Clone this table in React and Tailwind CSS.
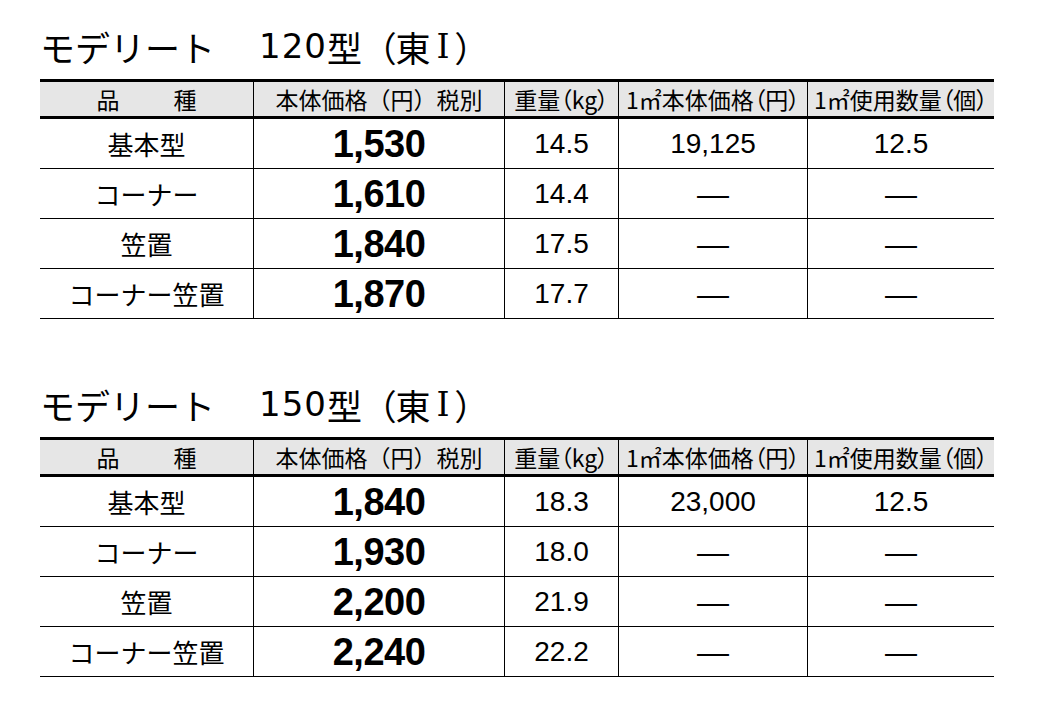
import React from "react";

const jp = "font-['Noto_Sans_CJK_JP','Noto_Sans',sans-serif]";
const lat = "font-['Liberation_Sans',Arial,sans-serif]";

const tables = [
  {
    title: "120",
    rows: [
      ["基本型", "1,530", "14.5", "19,125", "12.5"],
      ["コーナー", "1,610", "14.4", null, null],
      ["笠置", "1,840", "17.5", null, null],
      ["コーナー笠置", "1,870", "17.7", null, null],
    ],
  },
  {
    title: "150",
    rows: [
      ["基本型", "1,840", "18.3", "23,000", "12.5"],
      ["コーナー", "1,930", "18.0", null, null],
      ["笠置", "2,200", "21.9", null, null],
      ["コーナー笠置", "2,240", "22.2", null, null],
    ],
  },
];

const grid = "grid grid-cols-[214px_251px_114px_189px_186px]";

function Dash() {
  return <span className={`${lat} text-[32px] leading-none`}>—</span>;
}

function Section({ t }) {
  return (
    <div className="flex flex-col">
      <div className={`${jp} h-[36px] flex items-center text-[35px] leading-none text-black whitespace-pre`}>
        <span>モデリート</span>
        <span className="w-[44px]" />
        <span className="font-['DejaVu_Sans',sans-serif] text-[34px] tracking-[1px]">{t.title}</span>
        <span>型</span>
        <span className="ml-[16px] [font-feature-settings:'palt']">（東</span>
        <span className="font-['DejaVu_Serif','Liberation_Serif',serif] text-[33px] mx-[6px]">Ⅰ</span>
        <span className="[font-feature-settings:'palt']">）</span>
      </div>
      <div className="mt-[15px] w-[954px] border-t-[3px] border-black">
        <div className={`${grid} h-[37px] bg-[#e6e6e6] border-b-[3px] border-black ${jp} text-[23px] leading-none text-black`}>
          <div className="border-r border-black flex items-center justify-center gap-[54px]">
            <span>品</span>
            <span>種</span>
          </div>
          <div className="border-r border-black flex items-center justify-center">本体価格（円）税別</div>
          <div className="border-r border-black flex items-center justify-center [font-feature-settings:'palt']">
            重量（kg）
          </div>
          <div className="border-r border-black flex items-center justify-center [font-feature-settings:'palt']">
            1㎡本体価格（円）
          </div>
          <div className="flex items-center justify-center [font-feature-settings:'palt']">1㎡使用数量（個）</div>
        </div>
        {t.rows.map((r, i) => (
          <div key={i} className={`${grid} h-[50px] border-b border-black text-black`}>
            <div className={`border-r border-black flex items-center justify-center ${jp} text-[26px] leading-none`}>
              {r[0]}
            </div>
            <div className={`border-r border-black flex items-center justify-center ${lat} font-bold text-[38px] tracking-[-0.5px] leading-none`}>
              {r[1]}
            </div>
            <div className={`border-r border-black flex items-center justify-center ${lat} text-[28px] leading-none`}>
              {r[2]}
            </div>
            <div className={`border-r border-black flex items-center justify-center ${lat} text-[28px] leading-none`}>
              {r[3] ?? <Dash />}
            </div>
            <div className={`flex items-center justify-center ${lat} text-[28px] leading-none`}>
              {r[4] ?? <Dash />}
            </div>
          </div>
        ))}
      </div>
    </div>
  );
}

export default function App() {
  return (
    <div className="w-[1040px] h-[710px] bg-white pl-[40px] pt-[28px] flex flex-col gap-[67px] overflow-hidden">
      {tables.map((t) => (
        <Section key={t.title} t={t} />
      ))}
    </div>
  );
}
